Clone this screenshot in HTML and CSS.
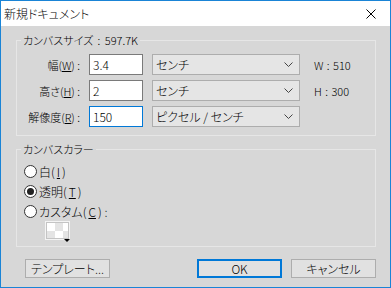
FILE: index.html
```html
<!DOCTYPE html>
<html lang="ja">
<head>
    <meta charset="UTF-8">
    <title>新規ドキュメント</title>
    <link rel="stylesheet" href="styles.css">
</head>
<body>
    <div class="dialog">
        <div class="titlebar">
            <span class="title">新規ドキュメント</span>
            <svg class="close" width="10" height="10" viewBox="0 0 10 10">
                <path d="M0.5 0.5 L9.5 9.5 M9.5 0.5 L0.5 9.5" stroke="#000" stroke-width="1" fill="none"/>
            </svg>
        </div>
        <div class="content">
            <fieldset class="group size-group">
                <legend>カンバスサイズ : 597.7K</legend>
                <div class="size-grid">
                    <label class="row-label">幅(<u>W</u>) :</label>
                    <input class="field" type="text" value="3.4">
                    <div class="select"><span>センチ</span><svg width="9" height="5" viewBox="0 0 9 5"><path d="M0.5 0.5 L4.5 4.5 L8.5 0.5" stroke="#444" fill="none"/></svg></div>
                    <span class="readout">W : 510</span>

                    <label class="row-label">高さ(<u>H</u>) :</label>
                    <input class="field" type="text" value="2">
                    <div class="select"><span>センチ</span><svg width="9" height="5" viewBox="0 0 9 5"><path d="M0.5 0.5 L4.5 4.5 L8.5 0.5" stroke="#444" fill="none"/></svg></div>
                    <span class="readout">H : 300</span>

                    <label class="row-label">解像度(<u>R</u>) :</label>
                    <input class="field focused" type="text" value="150">
                    <div class="select"><span>ピクセル / センチ</span><svg width="9" height="5" viewBox="0 0 9 5"><path d="M0.5 0.5 L4.5 4.5 L8.5 0.5" stroke="#444" fill="none"/></svg></div>
                    <span class="readout"></span>
                </div>
            </fieldset>

            <fieldset class="group color-group">
                <legend>カンバスカラー</legend>
                <label class="radio"><span class="circle"></span>白(<u>I</u>)</label>
                <label class="radio"><span class="circle checked"></span>透明(<u>T</u>)</label>
                <label class="radio"><span class="circle"></span>カスタム(<u>C</u>) :</label>
                <div class="swatch"></div>
            </fieldset>

            <div class="buttons">
                <button class="btn">テンプレート...</button>
                <span class="spacer"></span>
                <button class="btn default">OK</button>
                <button class="btn">キャンセル</button>
            </div>
        </div>
    </div>
</body>
</html>
```

FILE: styles.css
```css
* {
    box-sizing: border-box;
}
body {
    margin: 0;
    font-family: "Noto Sans CJK JP", "Noto Sans", sans-serif;
    font-size: 11px;
    font-weight: 300;
    font-feature-settings: "palt";
    color: #000;
}
.dialog {
    width: 391px;
    height: 288px;
    border: 1px solid #1a84d6;
    background-color: #d7d7d7;
    display: flex;
    flex-direction: column;
}
.titlebar {
    height: 25px;
    background-color: #fff;
    display: flex;
    align-items: center;
    justify-content: space-between;
    padding: 0 14px 0 3px;
    font-size: 12px;
}
.content {
    flex: 1;
    padding: 7px 14px 0 15px;
}
.group {
    margin: 0;
    padding: 0 0 8px 4px;
    border: 1px solid #e6e6e6;
    min-width: 0;
}
.group legend {
    padding: 0 2px;
    line-height: 14px;
    height: 14px;
    word-spacing: 2px;
}
.size-grid {
    display: grid;
    grid-template-columns: 62px auto auto 1fr;
    grid-auto-rows: 21px;
    row-gap: 5px;
    padding-top: 7px;
    align-items: center;
}
.row-label {
    text-align: right;
    padding-right: 3px;
    white-space: nowrap;
}
.field {
    width: 54px;
    height: 21px;
    margin-left: 6px;
    border: 1px solid #7a7a7a;
    background-color: #fff;
    font: inherit;
    font-size: 12px;
    padding: 0 3px;
    outline: none;
}
.field.focused {
    border-color: #0078d7;
}
.select {
    width: 148px;
    height: 21px;
    margin-left: 9px;
    border: 1px solid #adadad;
    background-color: #e5e5e5;
    display: flex;
    align-items: center;
    justify-content: space-between;
    padding: 0 6px 0 3px;
    font-size: 12px;
}
.readout {
    margin-left: 14px;
    font-size: 11px;
    word-spacing: 1px;
}
.color-group {
    margin-top: 6px;
    padding-bottom: 6px;
}
.color-group .radio:first-of-type {
    margin-top: 5px;
}
.radio {
    display: flex;
    align-items: center;
    height: 20px;
    gap: 2px;
    font-size: 12px;
}
.circle {
    width: 13px;
    height: 13px;
    margin-left: 3px;
    border: 1px solid #333;
    border-radius: 50%;
    background-color: #fff;
    display: flex;
    align-items: center;
    justify-content: center;
}
.circle.checked::after {
    content: "";
    width: 7px;
    height: 7px;
    border-radius: 50%;
    background-color: #222;
}
.swatch {
    position: relative;
    width: 25px;
    height: 19px;
    margin-left: 24px;
    border: 1px solid #f4f4f4;
    outline: 1px solid #c4c4c4;
    outline-offset: -2px;
    background-color: #fff;
    background-image: conic-gradient(#e4e4e4 25%, #fff 0 50%, #e4e4e4 0 75%, #fff 0);
    background-size: 16px 16px;
    background-position: 1px 1px;
}
.swatch::after {
    content: "";
    position: absolute;
    right: -1px;
    bottom: -3px;
    border-left: 3px solid transparent;
    border-right: 3px solid transparent;
    border-top: 3px solid #000;
}
.buttons {
    display: flex;
    margin-top: 12px;
    gap: 9px;
    padding-left: 9px;
}
.spacer {
    flex: 1;
}
.btn {
    width: 85px;
    height: 19px;
    border: 1px solid #adadad;
    background-color: #e1e1e1;
    font: inherit;
    font-size: 12px;
    padding: 0;
    line-height: 16px;
}
.btn.default {
    border: 2px solid #0078d7;
}
```
